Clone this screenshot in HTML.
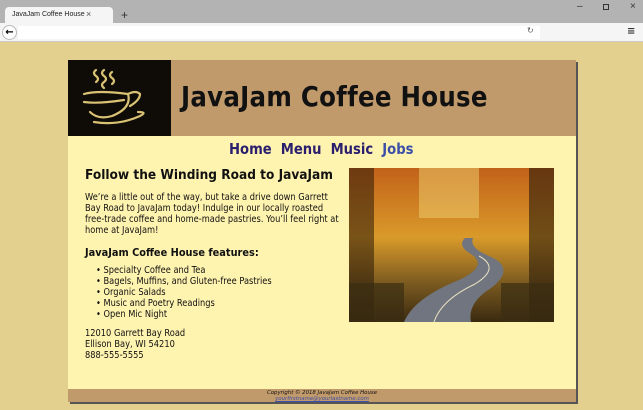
<!DOCTYPE html>
<html><head><style>
*{margin:0;padding:0;box-sizing:border-box}
body{width:643px;height:410px;overflow:hidden;background:#e3d08f;font-family:"DejaVu Sans","Liberation Sans",sans-serif;position:relative}
.a{position:absolute;white-space:nowrap}
.s{transform:scaleX(0.89);transform-origin:0 0}
</style></head><body>
<div class="a" style="left:0;top:0;width:643px;height:23px;background:#b3b3b3"></div>
<div class="a" style="left:5px;top:7px;width:108px;height:17px;background:#f5f5f5;border-radius:4px 4px 0 0"></div>
<div class="a" style="left:12px;top:11px;font:7px 'Liberation Sans',sans-serif;color:#222">JavaJam Coffee House</div>
<div class="a" style="left:86px;top:9px;font:9px 'Liberation Sans';color:#555">×</div>
<div class="a" style="left:121px;top:8px;font:12px 'Liberation Sans';color:#333">+</div>
<div class="a" style="left:577px;top:1px;font:10px 'Liberation Sans';color:#333">–</div>
<div class="a" style="left:603px;top:4px;width:6px;height:6px;border:1px solid #333"></div>
<div class="a" style="left:630px;top:1px;font:10px 'Liberation Sans';color:#333">×</div>
<div class="a" style="left:0;top:23px;width:643px;height:19px;background:#f5f5f5;border-bottom:1px solid #ccc"></div>
<div class="a" style="left:2px;top:25px;width:15px;height:15px;border:1px solid #bbb;border-radius:50%;background:#fff;font:bold 10px 'DejaVu Sans';text-align:center;line-height:13px">←</div>
<div class="a" style="left:18px;top:26px;width:522px;height:13px;background:#fff"></div>
<div class="a" style="left:527px;top:26px;font:8px 'DejaVu Sans';color:#555">↻</div>
<div class="a" style="left:627px;top:26px;font:bold 10px 'DejaVu Sans';color:#333">≡</div>
<div class="a" style="left:70px;top:62px;width:508px;height:342px;background:#555"></div>
<div class="a" style="left:68px;top:60px;width:508px;height:342px;background:#fff3b0"></div>
<div class="a" style="left:68px;top:60px;width:508px;height:76px;background:#c19a6b"></div>
<div class="a" style="left:68px;top:60px;width:103px;height:76px;background:#0f0c08"></div>
<svg class="a" style="left:68px;top:60px" width="103" height="76" viewBox="0 0 103 76" fill="none" stroke="#d9c274" stroke-width="2.2" stroke-linecap="round">
<path d="M16 34 Q30 30 60 34 Q64 48 44 56 Q30 60 22 52"/>
<path d="M60 34 Q68 30 72 34 Q72 40 62 46"/>
<path d="M16 42 Q30 44 56 40"/>
<path d="M26 62 Q50 66 72 56 Q80 52 70 52"/>
<path d="M28 10 q-4 3 0 6 q4 3 0 6"/><path d="M36 10 q-4 3 0 6 q4 3 0 6 q-4 3 0 6"/><path d="M44 12 q-4 3 0 6 q4 3 0 6"/>
</svg>
<div class="a s" style="left:181px;top:81px;font:bold 27.5px 'DejaVu Sans';color:#111;letter-spacing:0.3px">JavaJam Coffee House</div>
<div class="a s" style="left:229px;top:141px;font:bold 14.8px 'DejaVu Sans';color:#2a1f6e;word-spacing:5px">Home Menu Music <span style="color:#3b4fa8">Jobs</span></div>
<div class="a s" style="left:85px;top:167px;font:bold 13.7px 'DejaVu Sans';color:#111">Follow the Winding Road to JavaJam</div>
<div class="a s" style="left:85px;top:193px;font:9.3px/10.9px 'DejaVu Sans';color:#111">We’re a little out of the way, but take a drive down Garrett<br>Bay Road to JavaJam today! Indulge in our locally roasted<br>free-trade coffee and home-made pastries. You’ll feel right at<br>home at JavaJam!</div>
<div class="a s" style="left:85px;top:246px;font:bold 11px 'DejaVu Sans';color:#111">JavaJam Coffee House features:</div>
<div class="a s" style="left:96px;top:266px;font:9.3px/10.9px 'DejaVu Sans';color:#111">• Specialty Coffee and Tea<br>• Bagels, Muffins, and Gluten-free Pastries<br>• Organic Salads<br>• Music and Poetry Readings<br>• Open Mic Night</div>
<div class="a s" style="left:85px;top:329px;font:9.3px/10.9px 'DejaVu Sans';color:#111">12010 Garrett Bay Road<br>Ellison Bay, WI 54210<br>888-555-5555</div>
<svg class="a" style="left:349px;top:168px" width="205" height="154" viewBox="0 0 205 154">
<defs><linearGradient id="g" x1="0" y1="0" x2="0" y2="1"><stop offset="0" stop-color="#c2621a"/><stop offset="0.45" stop-color="#d99a2a"/><stop offset="0.75" stop-color="#7a5a20"/><stop offset="1" stop-color="#3b2a10"/></linearGradient></defs>
<rect width="205" height="154" fill="url(#g)"/>
<rect x="70" y="0" width="60" height="50" fill="#f0d070" opacity="0.5"/>
<rect x="0" y="0" width="25" height="154" fill="#2a1a0a" opacity="0.55"/>
<rect x="180" y="0" width="25" height="154" fill="#2a1a0a" opacity="0.6"/>
<path d="M55 154 Q65 130 110 112 Q140 98 122 86 Q108 78 116 70 L124 70 Q120 80 140 88 Q168 100 142 120 Q118 135 122 154 Z" fill="#707580"/>
<path d="M85 154 Q92 132 126 116 Q152 100 130 88" stroke="#e8e0c0" fill="none" stroke-width="1"/>
<rect x="0" y="115" width="55" height="39" fill="#3a2e12" opacity="0.7"/>
<rect x="152" y="115" width="53" height="39" fill="#3a2e12" opacity="0.7"/>
</svg>
<div class="a" style="left:68px;top:389px;width:508px;height:13px;background:#c19a6b"></div>
<div class="a" style="left:68px;top:390px;width:508px;text-align:center;font:italic 5.4px/6.3px 'DejaVu Sans';color:#111">Copyright © 2018 JavaJam Coffee House<br><span style="color:#3b4fa8;text-decoration:underline">yourfirstname@yourlastname.com</span></div>
</body></html>
